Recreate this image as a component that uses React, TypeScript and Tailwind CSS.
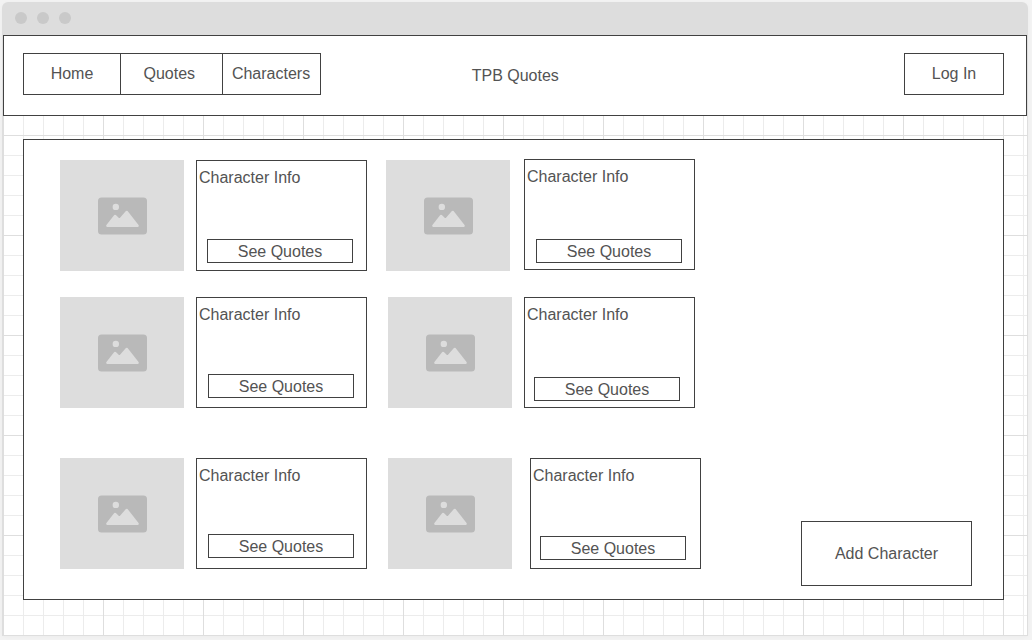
import React from "react";

type Entry = {
  gap: string;
  info: string;
  button: string;
};

const rows: { className: string; entries: Entry[] }[] = [
  {
    className: "flex h-[111px] items-start",
    entries: [
      { gap: "ml-0", info: "ml-3", button: "ml-[10px] mt-[52px]" },
      { gap: "ml-[19px]", info: "ml-[14px] -mt-px", button: "ml-[11px] mt-[53px]" },
    ],
  },
  {
    className: "mt-[26px] flex h-[111px] items-start",
    entries: [
      { gap: "ml-0", info: "ml-3", button: "ml-[11px] mt-[50px]" },
      { gap: "ml-[21px]", info: "ml-3", button: "ml-[9px] mt-[53px]" },
    ],
  },
  {
    className: "mt-[50px] flex h-[111px] items-start",
    entries: [
      { gap: "ml-0", info: "ml-3", button: "ml-[11px] mt-[49px]" },
      { gap: "ml-[21px]", info: "ml-[18px]", button: "ml-[9px] mt-[51px]" },
    ],
  },
];

function PictureIcon() {
  return (
    <svg width="49" height="38" viewBox="0 0 49 38" className="mt-px block">
      <rect x="0" y="0.4" width="49" height="37.2" rx="3.6" fill="#b9b9b9" />
      <circle cx="17.8" cy="9.9" r="3.2" fill="#dddddd" />
      <path
        d="M9.4 28.8 L17 18.9 L21.4 23.2 L28.8 14.9 L39.6 28.8 Z"
        fill="#dddddd"
        stroke="#dddddd"
        strokeWidth="2.4"
        strokeLinejoin="round"
      />
    </svg>
  );
}

function Character({ entry }: { entry: Entry }) {
  return (
    <div className={`flex items-start ${entry.gap}`}>
      <div className="flex h-[111px] w-[124px] items-center justify-center bg-[#dddddd]">
        <PictureIcon />
      </div>
      <div className={`flex h-[111px] w-[171px] flex-col items-start border border-[#414141] bg-white ${entry.info}`}>
        <p className="pl-[2px] pt-[8px] leading-[18px]">Character Info</p>
        <button
          className={`flex h-6 w-[146px] items-center justify-center border border-[#414141] pt-px leading-[18px] ${entry.button}`}
        >
          See Quotes
        </button>
      </div>
    </div>
  );
}

function NavItem({ label, className }: { label: string; className: string }) {
  return (
    <a className={`flex items-center justify-center border-[#414141] leading-[18px] ${className}`}>
      {label}
    </a>
  );
}

export default function App() {
  return (
    <div className="h-[640px] w-[1032px] overflow-hidden bg-[#f3f3f3] pl-[2px] pt-[2px] font-['Liberation_Sans',Arial,sans-serif] text-[16px] text-[#535353]">
      <div className="flex h-[634px] w-[1026px] flex-col overflow-hidden rounded-t-[6px] shadow-[0_1px_4px_rgba(0,0,0,0.03)]">
        <div className="flex h-[33px] shrink-0 items-center gap-[10px] bg-[#dddddd] pb-px pl-[13px]">
          <span className="size-3 rounded-full bg-[#c9c9c9]" />
          <span className="size-3 rounded-full bg-[#c9c9c9]" />
          <span className="size-3 rounded-full bg-[#c9c9c9]" />
        </div>
        <div className="flex-1 border-x border-b border-[#dedede] bg-white bg-[linear-gradient(to_right,#dedede_1px,transparent_1px),linear-gradient(to_bottom,#dedede_1px,transparent_1px),linear-gradient(to_right,#ececec_1px,transparent_1px),linear-gradient(to_bottom,#ececec_1px,transparent_1px)] bg-[size:100px_100px,100px_100px,20px_20px,20px_20px]">
          <header className="grid h-[81px] w-[1024px] grid-cols-[448.7px_88px_1fr] items-start border border-[#414141] bg-white pl-[19px] pr-[22px] pt-[17px]">
            <nav className="flex h-[42px] w-[298px] border border-[#414141]">
              <NavItem label="Home" className="w-[97px] border-r" />
              <NavItem label="Quotes" className="w-[102px] border-r pr-[4.5px]" />
              <NavItem label="Characters" className="flex-1 pr-px" />
            </nav>
            <h1 className="mt-[14px] whitespace-nowrap leading-[18px]">TPB Quotes</h1>
            <button className="flex h-[42px] w-[100px] items-center justify-center justify-self-end border border-[#414141] leading-[18px]">
              Log In
            </button>
          </header>
          <main className="ml-5 mt-[23px] flex h-[461px] w-[981px] items-end justify-between border border-[#414141] bg-white pl-9 pr-[31px]">
            <div className="self-start pt-5">
              {rows.map((row, i) => (
                <div key={i} className={row.className}>
                  {row.entries.map((entry, j) => (
                    <Character key={j} entry={entry} />
                  ))}
                </div>
              ))}
            </div>
            <button className="mb-[13px] flex h-[65px] w-[171px] items-center justify-center border border-[#414141] leading-[18px]">
              Add Character
            </button>
          </main>
        </div>
      </div>
    </div>
  );
}
